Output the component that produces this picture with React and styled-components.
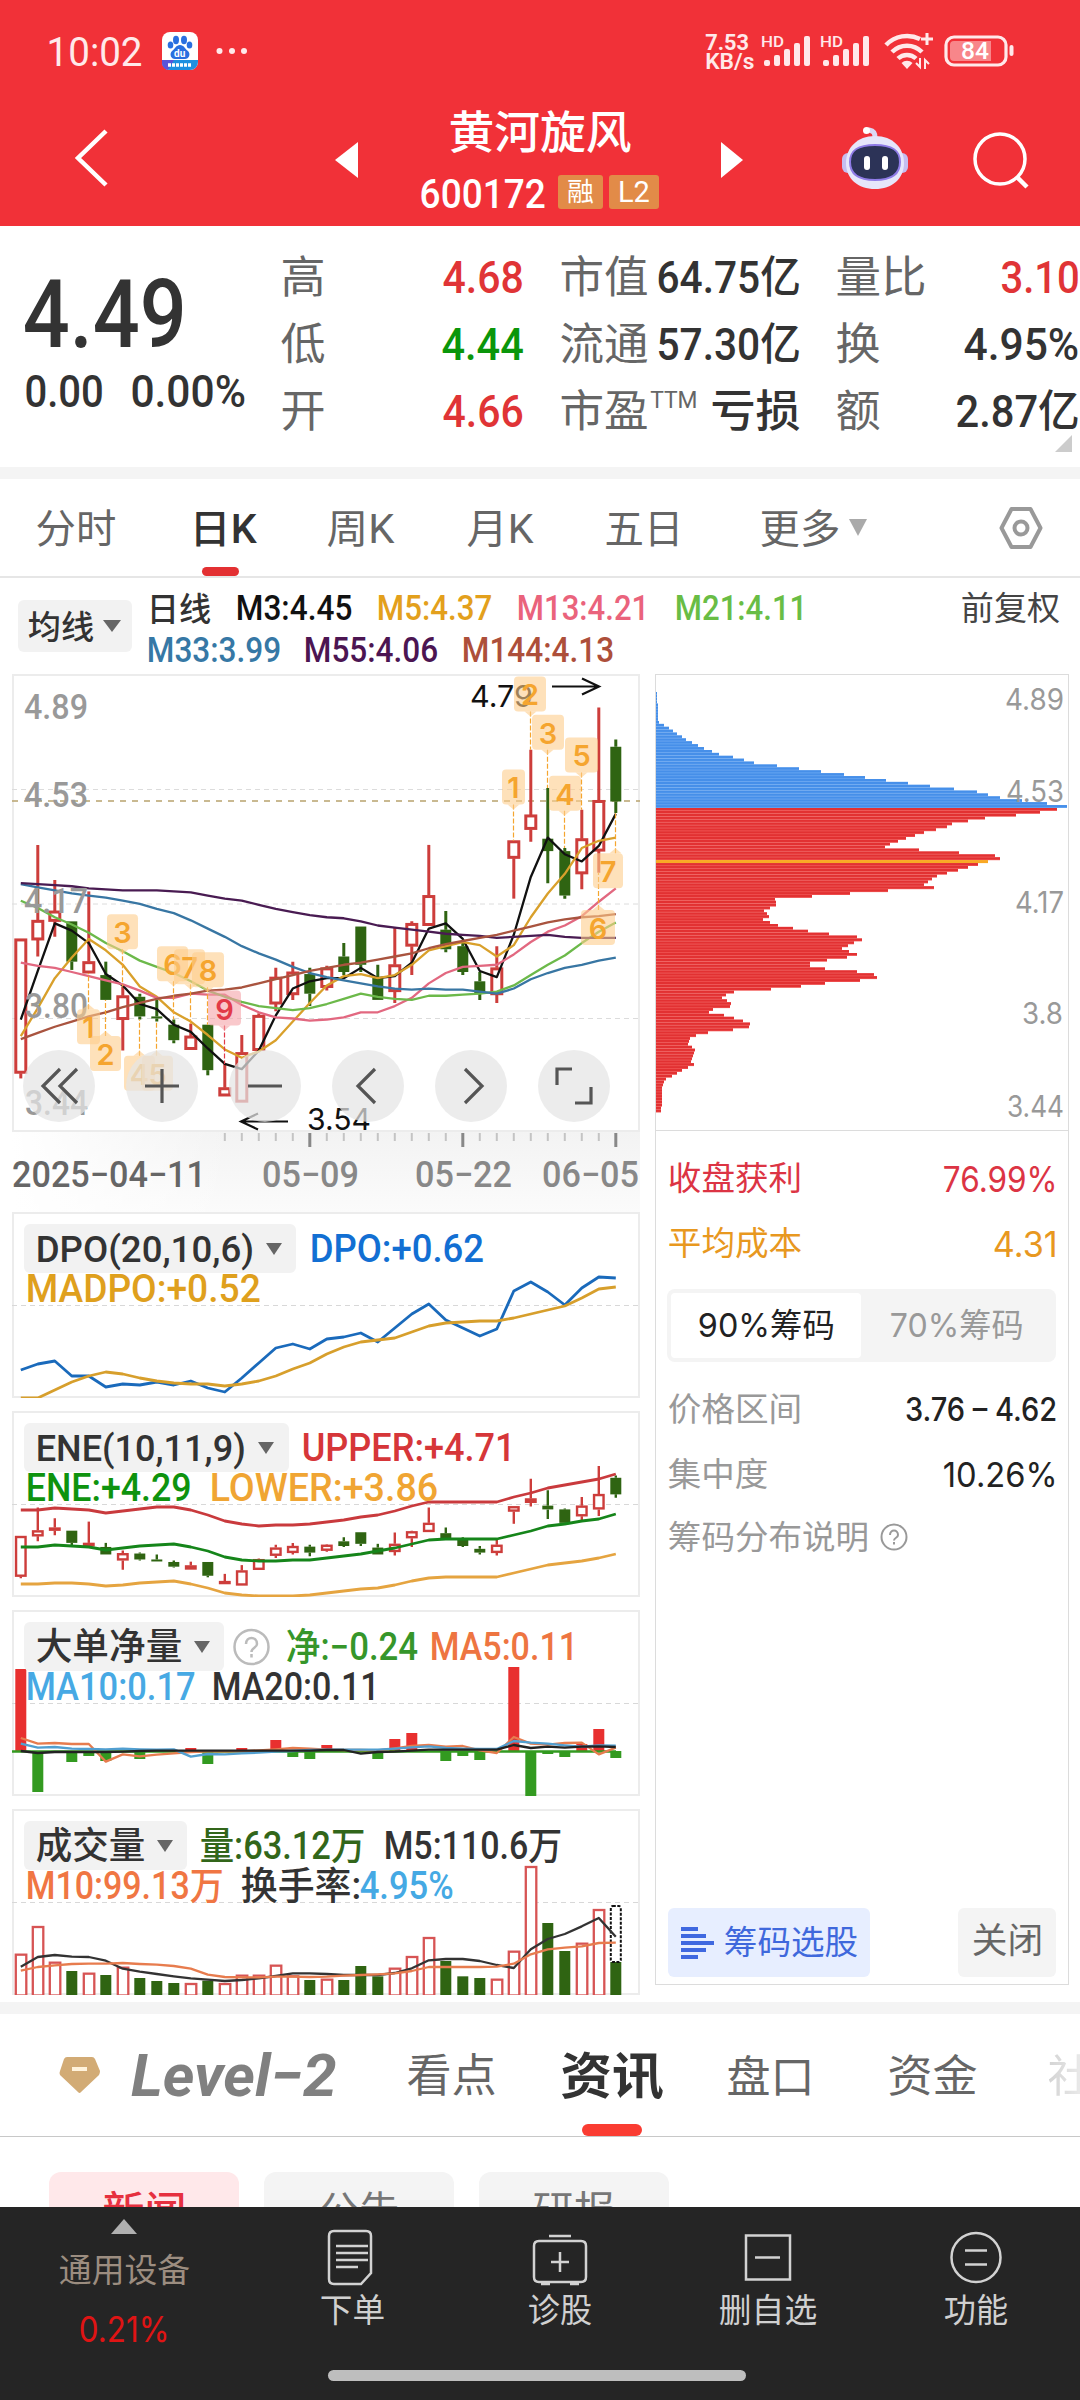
import { useLayoutEffect, useRef, useState } from "react";
import styled, { createGlobalStyle } from "styled-components";

const GlobalStyle = createGlobalStyle`
* { box-sizing: border-box; }
html, body { margin: 0; padding: 0; background: #fff; }
body { font-family: Roboto, "Noto Sans CJK SC", sans-serif; color: #333; }
svg { display: block; flex: none; overflow: visible; }
`

const Page = styled.div`
width: 1080px;
height: 2400px;
overflow: hidden;
display: flex;
flex-direction: column;
background: #fff;
`

/* text squeezed to a known width */
const Slot = styled.span`
display: block;
flex: none;
width: ${p => p.$w}px;
margin-left: ${p => p.$ml || 0}px;
font-size: ${p => p.$size}px;
font-weight: ${p => p.$weight || 400};
font-family: ${p => p.$round ? 'Inter, "Noto Sans CJK SC", sans-serif' : "inherit"};
font-style: ${p => p.$italic ? "italic" : "normal"};
color: ${p => p.$color || "inherit"};
line-height: 1.15;
white-space: nowrap;
`
const Ink = styled.span`
display: inline-block;
transform-origin: 0 50%;
`
function Fit({ w, ml, dy = 2, size, weight, color, round, italic, children }) {
    const ref = useRef(null);
    const [k, setK] = useState(1);
    const pad = size * 0.07;
    useLayoutEffect(() => {
        setK((w + pad) / ref.current.offsetWidth);
    }, [w, pad]);
    return <Slot $w={w} $ml={ml} $size={size} $weight={weight} $color={color} $round={round} $italic={italic}>
        <Ink ref={ref} style={{ transform: `translate(${-pad / 2}px, ${dy}px) scaleX(${k})` }}>{children}</Ink>
    </Slot>
}

const Label = ({ x, y, w, size, children, ...rest }) =>
    <text x={x} y={y} textLength={w} lengthAdjust="spacingAndGlyphs" fontSize={size} {...rest}>{children}</text>

/* ---------- header ---------- */
const Header = styled.header`
flex: none;
height: 226px;
background: #f13138;
color: #fff;
`
const StatusBar = styled.div`
height: 102px;
display: flex;
align-items: center;
padding-left: 48px;
color: #ffe9ea;
`
const Speed = styled.div`
margin-left: 458px;
width: 54px;
display: flex;
flex-direction: column;
line-height: 20px;
`
const NavBar = styled.div`
height: 116px;
display: flex;
align-items: center;
padding-left: 74px;
`
const NavIcon = styled.svg`
margin-left: ${p => p.$ml || 0}px;
`
const TitleBlock = styled.div`
width: 238px;
margin-left: 62px;
display: flex;
flex-direction: column;
align-items: center;
`
const TitleRow = styled.div`
height: 54px;
display: flex;
align-items: center;
`
const CodeRow = styled.div`
height: 52px;
margin-top: 10px;
display: flex;
align-items: center;
`
const Tag = styled.div`
width: ${p => p.$w}px;
height: 34px;
margin-left: ${p => p.$ml}px;
border-radius: 3px;
background: #e28b48;
display: flex;
align-items: center;
justify-content: center;
`

const Bars = ({ ml }) => <NavIcon $ml={ml} width="51" height="32" viewBox="0 0 51 32" fill="#ffe9ea">
    <rect x="3" y="25" width="6" height="6" rx="2" />
    <rect x="13" y="20" width="6" height="11" rx="2" />
    <rect x="23" y="14" width="6" height="17" rx="2" />
    <rect x="33" y="8" width="6" height="23" rx="2" />
    <rect x="43" y="1" width="6" height="30" rx="2" />
    <Label x="0" y="11.500" w="23" size="15" fontWeight="500">HD</Label>
</NavIcon>

function TopHeader() {
    return <Header>
        <StatusBar>
            <Fit w={93} size={41}>10:02</Fit>
            <NavIcon $ml={21} width="36" height="38" viewBox="0 0 36 38">
                <rect width="36" height="38" rx="8" fill="#fff" />
                <path d="M0 28h36v2a8 8 0 0 1-8 8H8a8 8 0 0 1-8-8z" fill="#1e8fe0" />
                <path d="M0 28h12l-6 10a8 8 0 0 1-6-8z" fill="#5a54d8" />
                <g fill="#2a6fe0">
                    <ellipse cx="14" cy="8" rx="3" ry="4.2" />
                    <ellipse cx="22" cy="8" rx="3" ry="4.2" />
                    <ellipse cx="8.5" cy="13" rx="2.8" ry="3.6" />
                    <ellipse cx="27.5" cy="13" rx="2.8" ry="3.6" />
                    <path d="M18 13c4 0 5 4 8 6 3 3 1 8-3 8H13c-4 0-6-5-3-8 3-2 4-6 8-6z" />
                </g>
                <text x="12" y="25" fontSize="10" fontWeight="700" fill="#fff">du</text>
                <path d="M6 33h24" stroke="#fff" strokeWidth="3.5" strokeDasharray="3 1" />
            </NavIcon>
            <NavIcon $ml={18} width="32" height="8" viewBox="0 0 32 8" fill="#ffe9ea">
                <circle cx="3.5" cy="4" r="3" /><circle cx="16" cy="4" r="3" /><circle cx="28" cy="4" r="3" />
            </NavIcon>
            <Speed>
                <Fit w={42} dy={4} size={22} weight={700}>7.53</Fit>
                <Fit w={48} dy={-2} size={22} weight={600}>KB/s</Fit>
            </Speed>
            <Bars ml={1} />
            <Bars ml={8} />
            <NavIcon $ml={13} width="50" height="38" viewBox="0 0 50 38" fill="none" stroke="#ffe9ea" strokeWidth="4.5">
                <path d="M2 13a29 29 0 0 1 34-6" />
                <path d="M8 20a21 21 0 0 1 30 0" />
                <path d="M14 26.500a13 13 0 0 1 18 0" />
                <path d="M17.500 31a8 8 0 0 1 11 0L23 37z" fill="#ffe9ea" stroke="none" />
                <path d="M43 1v12M37 7h12" strokeWidth="3" />
                <path d="M36 26v9l-4-4M41 37v-9l4 4" strokeWidth="2" />
            </NavIcon>
            <NavIcon $ml={10} width="70" height="32" viewBox="0 0 70 32">
                <rect x="2" y="2" width="60" height="28" rx="8" fill="none" stroke="#ffe9ea" strokeWidth="3.2" />
                <path d="M10 6h37v20H10a4 4 0 0 1-4-4V10a4 4 0 0 1 4-4z" fill="#f8868a" />
                <rect x="65.500" y="10" width="4" height="11" rx="2" fill="#ffe9ea" />
                <Label x="17" y="24" w="28" size="23" fontWeight="500" fill="#fff">84</Label>
            </NavIcon>
        </StatusBar>
        <NavBar>
            <NavIcon width="36" height="62" viewBox="0 0 36 62" fill="none" stroke="#fff" strokeWidth="4.500">
                <path d="M32 2L4 29l28 27" />
            </NavIcon>
            <NavIcon $ml={225} width="24" height="36" viewBox="0 0 24 36" fill="#fff"><path d="M23 0v36L0 18z" /></NavIcon>
            <TitleBlock>
                <TitleRow><Fit w={180} dy={5} size={45} weight={500}>黄河旋风</Fit></TitleRow>
                <CodeRow>
                    <Fit w={123} dy={3} size={40} weight={500}>600172</Fit>
                    <Tag $w={45} $ml={14}><Fit w={25} dy={1} size={26}>融</Fit></Tag>
                    <Tag $w={50} $ml={6}><Fit w={30} dy={1} size={29}>L2</Fit></Tag>
                </CodeRow>
            </TitleBlock>
            <NavIcon $ml={62} width="22" height="36" viewBox="0 0 22 36" fill="#fff"><path d="M0 0v36L22 18z" /></NavIcon>
            <NavIcon $ml={99} width="66" height="68" viewBox="0 0 66 68">
                <path d="M33 12c0-5-1-7-6-8" fill="none" stroke="#dcd9f5" strokeWidth="5" strokeLinecap="round" />
                <circle cx="24.500" cy="4.500" r="3.500" fill="#fff" />
                <rect x="0" y="27" width="12" height="20" rx="6" fill="#c5bdf0" />
                <rect x="54" y="27" width="12" height="20" rx="6" fill="#c5bdf0" />
                <path d="M33 10c18 0 29 12 29 27 0 16-12 26-29 26S4 53 4 37C4 22 15 10 33 10z" fill="#e6e6fa" />
                <path d="M33 19c17 0 25 5 25 17s-8 18-25 18S8 48 8 36s8-17 25-17z" fill="#2c3357" stroke="#8f7be6" strokeWidth="2" />
                <rect x="22" y="30" width="6" height="14" rx="3" fill="#fff" />
                <rect x="40" y="30" width="6" height="14" rx="3" fill="#fff" />
            </NavIcon>
            <NavIcon $ml={64} width="58" height="58" viewBox="0 0 58 58" fill="none" stroke="#fff" strokeWidth="3.500">
                <circle cx="28" cy="28" r="25" /><path d="M45 46l10 10" strokeWidth="4.500" />
            </NavIcon>
        </NavBar>
    </Header>
}

/* ---------- quote ---------- */
const Quote = styled.section`
flex: none;
position: relative;
height: 241px;
display: flex;
`
const PriceBlock = styled.div`
width: 282px;
padding: 38px 0 0 26px;
`
const PriceNow = styled.div`
height: 94px;
display: flex;
align-items: center;
`
const PriceChange = styled.div`
height: 44px;
margin-top: 8px;
display: flex;
align-items: center;
`
const QuoteColumn = styled.div`
width: ${p => p.$w}px;
margin-left: ${p => p.$ml || 0}px;
padding-top: 15px;
`
const QuoteRow = styled.div`
height: 67px;
display: flex;
align-items: center;
justify-content: space-between;
`
const Superscript = styled.span`
margin-right: auto;
align-self: flex-start;
padding: 11px 0 0 4px;
`
const Corner = styled.i`
position: absolute;
left: 1055px;
bottom: 15px;
border: solid transparent;
border-width: 0 0 17px 17px;
border-bottom-color: #ccc;
`
const Gap = styled.div`
flex: none;
height: 12px;
background: #f4f4f4;
`
const RED = "#e03436";
const DARK = "#333";

const quoteColumns = [
    { w: 240, rows: [["高", 42, "4.68", 78, RED], ["低", 42, "4.44", 79, "#0a960a"], ["开", 42, "4.66", 78, RED]] },
    { w: 238, ml: 39, rows: [["市值", 86, "64.75亿", 141, DARK], ["流通", 86, "57.30亿", 141, DARK], ["市盈", 86, "亏损", 87, DARK, "TTM"]] },
    { w: 241, ml: 38, rows: [["量比", 88, "3.10", 76, RED], ["换", 42, "4.95%", 113, DARK], ["额", 42, "2.87亿", 121, DARK]] },
]

function QuotePanel() {
    return <Quote>
        <PriceBlock>
            <PriceNow><Fit w={157} dy={4} size={94} weight={500}>4.49</Fit></PriceNow>
            <PriceChange>
                <Fit w={76} dy={4} size={45} weight={500}>0.00</Fit>
                <Fit w={112} dy={4} ml={30} size={45} weight={500}>0.00%</Fit>
            </PriceChange>
        </PriceBlock>
        {quoteColumns.map((col, i) => <QuoteColumn key={i} $w={col.w} $ml={col.ml}>
            {col.rows.map(([name, nw, value, vw, color, sup]) => <QuoteRow key={name}>
                <Fit w={nw} dy={4} size={44} color="#666">{name}</Fit>
                {sup && <Superscript><Fit w={46} size={23} color="#666">{sup}</Fit></Superscript>}
                <Fit w={vw} dy={4} size={44} weight={500} color={color}>{value}</Fit>
            </QuoteRow>)}
        </QuoteColumn>)}
        <Corner />
    </Quote>
}

/* ---------- period tabs ---------- */
const PeriodTabs = styled.nav`
flex: none;
height: 99px;
display: flex;
padding-left: 37px;
border-bottom: 2px solid #e6e6e6;
`
const PeriodTab = styled.div`
position: relative;
height: 97px;
display: flex;
align-items: center;
margin-left: ${p => p.$ml || 0}px;
&::after {
content: "";
display: ${p => p.$active ? "block" : "none"};
position: absolute;
left: 11px;
bottom: 0;
width: 37px;
height: 9px;
border-radius: 5px;
background: #e33032;
}
`
const Caret = styled.i`
flex: none;
margin-left: ${p => p.$ml}px;
border: solid transparent;
border-width: ${p => p.$h}px ${p => p.$w / 2}px 0;
border-top-color: ${p => p.$color || "#666"};
`

function Periods() {
    return <PeriodTabs>
        <PeriodTab><Fit w={78} size={40} color="#666">分时</Fit></PeriodTab>
        <PeriodTab $ml={76} $active><Fit w={64} size={40} weight={500}>日K</Fit></PeriodTab>
        <PeriodTab $ml={73}><Fit w={65} size={40} color="#666">周K</Fit></PeriodTab>
        <PeriodTab $ml={75}><Fit w={64} size={40} color="#666">月K</Fit></PeriodTab>
        <PeriodTab $ml={74}><Fit w={76} size={40} color="#666">五日</Fit></PeriodTab>
        <PeriodTab $ml={79}>
            <Fit w={78} size={40} color="#666">更多</Fit>
            <Caret $ml={10} $w={19} $h={17} $color="#aaa" />
        </PeriodTab>
        <PeriodTab $ml={132}>
            <svg width="44" height="44" viewBox="0 0 44 44" fill="none" stroke="#999" strokeWidth="4" strokeLinejoin="round">
                <path d="M12.500 3h19L41.500 22l-10 19h-19L2.500 22z" /><circle cx="22" cy="22" r="6.500" />
            </svg>
        </PeriodTab>
    </PeriodTabs>
}

/* ---------- moving average legend ---------- */
const Legend = styled.div`
flex: none;
height: 96px;
display: flex;
padding-left: 18px;
`
const MaButton = styled.div`
width: 114px;
height: 52px;
margin-top: 22px;
padding-left: 11px;
border-radius: 6px;
background: #f2f2f2;
display: flex;
flex: none;
align-items: center;
`
const LegendLines = styled.div`
flex: none;
width: ${p => p.$w}px;
margin-left: 16px;
padding-top: 7px;
`
const LegendLine = styled.div`
height: 43px;
display: flex;
align-items: center;
`

function MaLegend() {
    return <Legend>
        <MaButton><Fit w={64} size={33} weight={500}>均线</Fit><Caret $ml={10} $w={18} $h={12} /></MaButton>
        <LegendLines $w={798}>
            <LegendLine>
                <Fit w={62} dy={3} size={33} weight={500}>日线</Fit>
                <Fit w={114} dy={3} ml={27} size={35} weight={500} color="#111">M3:4.45</Fit>
                <Fit w={113} dy={3} ml={27} size={35} weight={500} color="#e3a01c">M5:4.37</Fit>
                <Fit w={130} dy={3} ml={27} size={35} weight={500} color="#ea637c">M13:4.21</Fit>
                <Fit w={130} dy={3} ml={28} size={35} weight={500} color="#69bd45">M21:4.11</Fit>
            </LegendLine>
            <LegendLine>
                <Fit w={132} size={35} weight={500} color="#3678a5">M33:3.99</Fit>
                <Fit w={132} ml={25} size={35} weight={500} color="#4c1552">M55:4.06</Fit>
                <Fit w={150} ml={26} size={35} weight={500} color="#ad4f3a">M144:4.13</Fit>
            </LegendLine>
        </LegendLines>
        <LegendLines $w={97}><LegendLine><Fit w={97} size={33} color="#444">前复权</Fit></LegendLine></LegendLines>
    </Legend>
}

/* ---------- charts ---------- */
const Charts = styled.section`
flex: none;
height: 1328px;
display: flex;
padding-left: 12px;
`
const ChartColumn = styled.div`
width: 628px;
flex: none;
`
const KBox = styled.div`
position: relative;
height: 458px;
box-shadow: inset 0 0 0 2px #ececec;
`
const ToolRow = styled.div`
position: absolute;
left: 11px;
top: 376px;
display: flex;
gap: 31px;
`
const ToolButton = styled.button`
width: 72px;
height: 72px;
padding: 0;
border: 0;
border-radius: 50%;
background: rgba(229, 229, 229, .72);
display: flex;
align-items: center;
justify-content: center;
`
const Axis = styled.div`
height: 80px;
background: linear-gradient(90deg, #fff 0, rgba(255,255,255,0) 220px), linear-gradient(#f3f3f3, #fbfbfb);
`

const xAt = i => 20.8 + i * 17;
const points = (ys, f = y => y) => ys.map((y, i) => `${xAt(i)},${f(y)}`).join(" ");
const kY = y => 660 + (y - 660) * 1.0332;
const eneY = y => 1535 + (y - 929) * 0.313;

// up/down, high, body top, body bottom, low
const candles = [
    ["u", 929, 929, 1059, 1064], ["u", 838, 911, 930, 946], ["u", 872, 902, 912, 927], ["d", 912, 912, 951, 959],
    ["u", 883, 951, 962, 962], ["d", 951, 964, 988, 988], ["u", 975, 984, 1007, 1037], ["d", 982, 985, 1004, 1007],
    ["d", 988, 1004, 1006, 1009], ["d", 1007, 1012, 1027, 1030], ["u", 1011, 1023, 1036, 1036], ["d", 1012, 1012, 1056, 1061],
    ["u", 1050, 1073, 1081, 1081], ["u", 1022, 1039, 1087, 1087], ["u", 1001, 1003, 1037, 1037], ["u", 957, 966, 992, 999],
    ["u", 951, 961, 983, 988], ["d", 957, 963, 982, 994], ["u", 955, 957, 976, 979], ["d", 933, 946, 961, 964],
    ["d", 917, 917, 954, 961], ["d", 954, 966, 988, 988], ["u", 918, 954, 980, 991], ["u", 912, 914, 936, 964],
    ["u", 838, 887, 916, 916], ["d", 902, 920, 939, 942], ["d", 933, 936, 961, 964], ["d", 961, 970, 982, 988],
    ["u", 936, 957, 983, 991], ["u", 834, 834, 851, 890], ["u", 746, 809, 823, 835], ["d", 783, 832, 844, 875],
    ["d", 841, 844, 887, 890], ["u", 804, 832, 866, 881], ["u", 705, 795, 844, 865], ["d", 736, 743, 796, 807],
]
const m3 = [1007, 960, 914, 921, 933, 963, 974, 992, 997, 1012, 1019, 1035, 1050, 1055, 1037, 1003, 977, 970, 967, 967, 957, 967, 965, 952, 919, 914, 929, 960, 966, 925, 869, 831, 847, 854, 839, 808]
const m5 = [1023, 996, 967, 947, 929, 940, 954, 975, 985, 1000, 1009, 1022, 1036, 1044, 1038, 1027, 1009, 991, 974, 965, 963, 967, 964, 954, 940, 936, 932, 935, 946, 935, 908, 885, 866, 841, 834, 831]
const m13 = [952, 955, 957, 961, 965, 969, 973, 979, 986, 986, 982, 983, 983, 993, 1000, 1005, 1006, 1008, 1007, 1005, 1000, 1000, 994, 986, 972, 962, 956, 955, 954, 944, 932, 922, 916, 907, 893, 880]
const m21 = [892, 899, 908, 915, 923, 933, 941, 950, 956, 962, 970, 979, 985, 990, 994, 996, 998, 996, 992, 987, 982, 985, 987, 988, 984, 984, 983, 982, 980, 974, 964, 954, 945, 933, 922, 913]
const m33 = [876, 879, 882, 885, 887, 889, 892, 895, 900, 904, 911, 919, 927, 936, 943, 949, 956, 962, 966, 969, 972, 975, 977, 978, 977, 978, 978, 980, 982, 977, 968, 962, 957, 954, 950, 947]
const m55 = [875, 876, 877, 878, 880, 881, 882, 882, 882, 883, 884, 887, 890, 892, 896, 900, 903, 906, 908, 909, 912, 916, 918, 920, 922, 924, 925, 926, 928, 927, 926, 925, 927, 928, 928, 928]
const m144 = [1026, 1020, 1014, 1009, 1004, 1000, 995, 991, 987, 984, 982, 979, 978, 976, 972, 968, 964, 960, 957, 954, 952, 949, 946, 943, 938, 934, 931, 928, 925, 921, 917, 913, 910, 908, 907, 905]

// digit, box left, box top, box width, candle x, pointer side, line end
const marks = [
    [1, 77, 997, 23, 88.5, "up", 962], [2, 90, 1023, 31, 105.500, "up", 988], [3, 107, 905, 31, 122.500, "down", 975],
    [4, 124, 1042, 31, 139.500, "up", 1007], [5, 142, 1042, 31, 156.500, "up", 1009],
    [6, 157, 936, 31, 173.500, "down", 1007], [7, 174, 939, 31, 190.500, "down", 1011], [8, 192, 942, 32, 207.500, "down", 1012],
    [9, 208, 979, 33, 224.500, "down", 1050, "#e23a48", "#f5a3a8"],
    [1, 502, 765, 23, 513.500, "down", 834], [2, 514, 675, 32, 530.500, "down", 746], [3, 532, 712, 32, 547.500, "down", 783],
    [4, 549, 771, 32, 564.500, "down", 841], [5, 565, 734, 33, 581.500, "down", 804],
    [6, 581, 901, 34, 598.500, "up", 865], [7, 593, 846, 30, 615.500, "up", 807],
]

const Candle = ({ kind, x, high, top, bottom, low, slim }) => {
    const color = kind === "u" ? "#cd3d3b" : "#2f6412";
    const w = slim ? 9.5 : 10;
    const h = Math.max(bottom - top, 2);
    return <g stroke={color} strokeWidth={slim ? 2.4 : 3}>
        <path d={`M${x} ${high}V${top}M${x} ${bottom}V${low}`} />
        {kind === "u"
            ? <rect x={x - w / 2} y={top + 1} width={w} height={Math.max(h - 2, 1)} fill="#fff" />
            : <rect x={x - 5.5} y={top} width="11" height={h} fill={color} stroke="none" />}
    </g>
}

const Line = ({ ys, color, f, w = 2.3 }) => <polyline points={points(ys, f)} fill="none" stroke={color} strokeWidth={w} strokeLinejoin="round" />

function KChart() {
    return <KBox>
        <svg width="628" height="458" viewBox="12 673 628 458">
            <g strokeDasharray="5 4" stroke="#dcdcdc" strokeWidth="1">
                <path d="M12 788.500h628M12 903h628M12 1017.500h628" />
                <path d="M12 800h628" stroke="#b8a36e" strokeWidth="1.500" strokeDasharray="6 6" />
            </g>
            {candles.map(([kind, ...v], i) => {
                const [high, top, bottom, low] = v.map(kY);
                return <Candle key={i} kind={kind} x={xAt(i)} high={high} top={top} bottom={bottom} low={low} />
            })}
            <Line ys={m3} f={kY} color="#111" />
            <Line ys={m5} f={kY} color="#d9a02b" />
            <Line ys={m13} f={kY} color="#e26880" />
            <Line ys={m21} f={kY} color="#6cb94a" />
            <Line ys={m33} f={kY} color="#3876a3" />
            <Line ys={m55} f={kY} color="#491b52" />
            <Line ys={m144} f={kY} color="#a9543f" />
            <g fill="#999" fontWeight="500">
                <Label x="24" y="718" w="64" size="35">4.89</Label>
                <Label x="24" y="806" w="64" size="35">4.53</Label>
                <Label x="24" y="912" w="64" size="35">4.17</Label>
                <Label x="25" y="1017" w="63" size="35">3.80</Label>
                <Label x="25" y="1114" w="63" size="35">3.44</Label>
            </g>
            <g fontFamily="Inter">
                <Label x="470" y="706" w="63" size="30" fill="#111">4.79</Label>
                <Label x="307" y="1129" w="64" size="30" fill="#111">3.54</Label>
            </g>
            <path d="M552 685.500h46M582 677.500l17 8l-17 8M288 1120.500h-46M258 1112.500l-17 8l17 8" fill="none" stroke="#111" strokeWidth="2.200" />
            {marks.map(([n, bx, top, bw, cx, side, end, ink = "#f5a52f", bg = "#fdcd8c"], i) => {
                const by = kY(top);
                return <g key={i}>
                    <path d={`M${cx} ${side === "up" ? by : by + 35}V${kY(end)}`} stroke={ink} strokeWidth="1.2" strokeDasharray="5 2" />
                    <g fill={bg} fillOpacity=".6">
                        <rect x={bx} y={by} width={bw} height="35" rx="4" />
                        <path d={side === "up" ? `M${cx - 6} ${by}h12l-6-5z` : `M${cx - 6} ${by + 35}h12l-6 5z`} />
                    </g>
                    <text x={bx + bw / 2} y={by + 29} fontSize="29" fontWeight="600" fontFamily="Inter" textAnchor="middle" fill={ink}>{n}</text>
                </g>
            })}
        </svg>
        <ToolRow>
            {["M21 3L4 20l17 17M38 3L21 20l17 17", "M3 20h34M20 3v34", "M3 20h34", "M27 3L10 20l17 17", "M14 3l17 17l-17 17", "M18 3H3v16M21 37h16V21"].map(d =>
                <ToolButton key={d}>
                    <svg width="40" height="40" viewBox="0 0 40 40" fill="none" stroke="#555" strokeWidth="3.200"><path d={d} /></svg>
                </ToolButton>)}
        </ToolRow>
    </KBox>
}

function TimeAxis() {
    const ticks = Array.from({ length: 24 }, (_, k) => k + 12);
    return <Axis>
        <svg width="628" height="80" viewBox="12 1131 628 80">
            {ticks.map(i => {
                const major = [17, 26, 35].includes(i);
                return <path key={i} d={`M${xAt(i)} 1132v${major ? 14 : 8}`} stroke={major ? "#888" : "#c4c4c4"} strokeWidth={major ? 3 : 2} />
            })}
            <g fontWeight="500" fill="#888">
                <Label x="12" y="1185.500" w="194" size="36" fill="#666">2025−04−11</Label>
                <Label x="262" y="1185.500" w="97" size="36">05−09</Label>
                <Label x="415" y="1185.500" w="97" size="36">05−22</Label>
                <Label x="542" y="1185.500" w="97" size="36">06−05</Label>
            </g>
        </svg>
    </Axis>
}

/* ---------- indicator boxes ---------- */
const Indicators = styled.div`
display: flex;
flex-direction: column;
gap: 13px;
`
const IndicatorBox = styled.div`
position: relative;
height: 186px;
padding: 12px 0 0 12px;
box-shadow: inset 0 0 0 2px #ececec;
`
const Plot = styled.svg`
position: absolute;
left: 0;
top: 0;
overflow: hidden;
`
const HeadRow = styled.div`
position: relative;
height: ${p => p.$h}px;
padding-left: ${p => p.$pad || 0}px;
display: flex;
align-items: center;
`
const Picker = styled.div`
width: ${p => p.$w}px;
height: 49px;
flex: none;
padding-left: 13px;
border-radius: 6px;
background: #f2f2f2;
display: flex;
align-items: center;
`

function Indicator({ top, name, nw, bw, first, second, help, children }) {
    return <IndicatorBox>
        <Plot width="628" height="186" viewBox={`12 ${top} 628 186`}>
            <path d={`M12 ${top + 93.500}h628`} stroke="#d8d8d8" strokeDasharray="5 4" />
            {children}
        </Plot>
        <HeadRow $h={49}>
            <Picker $w={bw}><Fit w={nw} size={37} weight={500}>{name}</Fit><Caret $ml={13} $w={16} $h={12} /></Picker>
            {help && <NavIcon $ml={9} width="37" height="38" viewBox="0 0 37 38" fill="none" stroke="#bbb" strokeWidth="2.500">
                <circle cx="18.500" cy="19" r="17" /><path d="M13 16c0-8 11-8 11 0 0 4-5.500 3.500-5.500 8M18.500 26v3.500" />
            </NavIcon>}
            {first.map(([t, w, ml, c]) => <Fit key={t} w={w} dy={1} ml={ml} size={38} weight={500} color={c}>{t}</Fit>)}
        </HeadRow>
        <HeadRow $h={31} $pad={3}>
            {second.map(([t, w, ml, c]) => <Fit key={t} w={w} dy={1} ml={ml} size={38} weight={500} color={c}>{t}</Fit>)}
        </HeadRow>
    </IndicatorBox>
}

const dpo = [1369, 1363, 1360, 1375, 1375, 1386, 1383, 1384, 1381, 1384, 1380, 1387, 1391, 1377, 1362, 1347, 1343, 1348, 1338, 1336, 1332, 1341, 1327, 1313, 1303, 1319, 1327, 1335, 1328, 1290, 1281, 1291, 1304, 1287, 1276, 1277]
const madpo = [1397, 1397, 1389, 1381, 1375, 1371, 1373, 1377, 1380, 1382, 1383, 1383, 1385, 1383, 1380, 1375, 1368, 1362, 1353, 1346, 1341, 1339, 1337, 1331, 1325, 1322, 1321, 1320, 1320, 1317, 1313, 1309, 1305, 1297, 1288, 1286]
const upper = [1509, 1509, 1507, 1508, 1509, 1512, 1510, 1508, 1506, 1506, 1509, 1514, 1520, 1523, 1525, 1524, 1524, 1523, 1521, 1519, 1516, 1514, 1510, 1505, 1501, 1501, 1501, 1501, 1501, 1496, 1492, 1487, 1484, 1481, 1478, 1473]
const ene = [1546, 1546, 1544, 1545, 1546, 1549, 1547, 1545, 1544, 1543, 1546, 1550, 1556, 1559, 1560, 1560, 1559, 1559, 1557, 1555, 1553, 1550, 1547, 1543, 1539, 1538, 1538, 1538, 1538, 1534, 1530, 1525, 1523, 1520, 1518, 1513]
const lower = [1583, 1583, 1582, 1582, 1583, 1585, 1584, 1582, 1581, 1580, 1583, 1587, 1592, 1594, 1595, 1595, 1595, 1594, 1592, 1590, 1588, 1587, 1584, 1580, 1577, 1576, 1576, 1576, 1576, 1572, 1568, 1564, 1562, 1560, 1557, 1553]

// candle index, bar end; the sign follows from the side of the zero line
const netBars = [[0, 1668], [1, 1791], [3, 1761], [4, 1755], [5, 1760], [7, 1758], [10, 1747], [11, 1763], [13, 1747], [15, 1739], [16, 1756], [17, 1758], [18, 1744], [21, 1758], [22, 1738], [23, 1732], [25, 1760], [26, 1755], [27, 1759], [29, 1666], [30, 1795], [31, 1753], [32, 1756], [33, 1743], [34, 1728], [35, 1757]]
// line heights below are in thirds of a pixel from y = 1600
const third = y => 1600 + y / 3;
const net5 = [411, 428, 426, 429, 429, 482, 460, 466, 461, 457, 453, 451, 451, 451, 448, 445, 441, 443, 446, 447, 447, 448, 442, 435, 432, 437, 435, 448, 456, 408, 428, 431, 426, 425, 460, 440]
const net10 = [428, 440, 438, 443, 444, 445, 443, 445, 446, 445, 467, 459, 460, 457, 455, 452, 450, 447, 446, 446, 446, 446, 443, 439, 436, 441, 443, 444, 444, 420, 425, 428, 433, 437, 433, 434]
const net20 = [450, 456, 453, 453, 453, 453, 452, 450, 449, 449, 449, 449, 449, 449, 449, 449, 449, 449, 447, 447, 458, 453, 452, 449, 446, 446, 446, 446, 446, 432, 441, 437, 440, 437, 436, 438]
const volumes = [1058, 975, 1082, 1110, 1115, 1122, 1097, 1131, 1140, 1146, 1146, 1139, 1146, 1121, 1121, 1091, 1123, 1137, 1133, 1137, 1095, 1126, 1100, 1065, 1008, 1080, 1126, 1131, 1133, 1049, 795, 966, 1050, 1025, 924, 1083]
const vol5 = [1097, 1068, 1062, 1067, 1068, 1079, 1103, 1112, 1119, 1126, 1132, 1136, 1140, 1137, 1132, 1125, 1117, 1117, 1119, 1122, 1122, 1122, 1116, 1102, 1078, 1074, 1074, 1080, 1092, 1101, 1045, 1014, 999, 976, 951, 1007]
const vol10 = [1109, 1098, 1093, 1089, 1088, 1088, 1086, 1089, 1091, 1095, 1103, 1121, 1128, 1129, 1129, 1127, 1127, 1128, 1127, 1124, 1122, 1120, 1117, 1110, 1098, 1098, 1098, 1098, 1097, 1088, 1060, 1045, 1040, 1036, 1026, 1025]

function IndicatorList() {
    return <Indicators>
        <Indicator top={1211} name="DPO(20,10,6)" nw={216} bw={272}
            first={[["DPO:+0.62", 172, 15, "#126fd3"]]}
            second={[["MADPO:+0.52", 232, 0, "#dfa01d"]]}>
            <Line ys={dpo} color="#1a6abb" w={2.8} />
            <Line ys={madpo} color="#d79f2c" w={2.8} />
        </Indicator>
        <Indicator top={1410} name="ENE(10,11,9)" nw={208} bw={265}
            first={[["UPPER:+4.71", 211, 14, "#d63639"]]}
            second={[["ENE:+4.29", 163, 0, "#0e930e"], ["LOWER:+3.86", 226, 21, "#f0a533"]]}>
            {candles.map(([kind, ...v], i) => {
                const [high, top, bottom, low] = v.map(eneY);
                return <Candle key={i} slim kind={kind} x={xAt(i)} high={high} top={top} bottom={bottom} low={low} />
            })}
            <Line ys={upper} color="#c93a3d" w={2.8} />
            <Line ys={ene} color="#15851a" w={2.8} />
            <Line ys={lower} color="#e5a440" w={2.8} />
        </Indicator>
        <Indicator top={1609} name="大单净量" nw={144} bw={200} help
            first={[["净:−0.24", 130, 17, "#36962a"], ["MA5:0.11", 146, 14, "#ee7541"]]}
            second={[["MA10:0.17", 167, 0, "#47a9e4"], ["MA20:0.11", 165, 19, DARK]]}>
            {netBars.map(([i, end]) =>
                <rect key={i} x={xAt(i) - 5.5} y={Math.min(1750, end)} width="11" height={Math.abs(end - 1750)} fill={end < 1750 ? "#e8302f" : "#339a20"} />)}
            <path d="M12 1750.500h604" stroke="#339a20" strokeWidth="2.500" />
            <Line ys={net5} f={third} color="#e77c4e" />
            <Line ys={net10} f={third} color="#519fd0" />
            <Line ys={net20} f={third} color="#222" />
        </Indicator>
        <Indicator top={1808} name="成交量" nw={107} bw={163}
            first={[["量:63.12万", 163, 14, "#32661a"], ["M5:110.6万", 176, 21, DARK]]}
            second={[["M10:99.13万", 195, 0, "#f07643"], ["换手率:", 118, 20, DARK], ["4.95%", 91, 1, "#45a9e4"]]}>
            {volumes.map((v, i) => candles[i][0] === "u"
                ? <rect key={i} x={xAt(i) - 5} y={third(v) + 1} width="10.500" height={1993.500 - third(v)} fill="#fff" stroke="#d75454" strokeWidth="2.300" />
                : <rect key={i} x={xAt(i) - 5.5} y={third(v)} width="11" height={1995 - third(v)} fill="#2f6412" />)}
            <rect x={xAt(35) - 5} y="1905" width="10" height="56" rx="2" fill="none" stroke="#111" strokeWidth="2" strokeDasharray="3 1.500" />
            <Line ys={vol5} f={third} color="#333" />
            <Line ys={vol10} f={third} color="#e77c4e" />
        </Indicator>
    </Indicators>
}

/* ---------- chip distribution ---------- */
const ChipPanel = styled.aside`
width: 414px;
height: 1311px;
margin-left: 15px;
flex: none;
border: 1px solid #dcdcdc;
display: flex;
flex-direction: column;
`
const ChipChart = styled.div`
height: 456px;
border-bottom: 1px solid #dcdcdc;
`
const InfoRow = styled.div`
height: 64.500px;
display: flex;
align-items: center;
justify-content: space-between;
padding: 0 12px 0 13px;
`
const InfoGroup = styled.div`
margin-top: 14px;
`
const Segment = styled.div`
height: 73px;
margin: 15px 12px 0 11px;
padding: 4px;
border-radius: 8px;
background: #f4f4f4;
display: flex;
`
const SegmentItem = styled.div`
flex: ${p => p.$active ? "0 0 190px" : 1};
border-radius: 4px;
background: ${p => p.$active ? "#fff" : "none"};
display: flex;
align-items: center;
justify-content: center;
`
const HelpWrap = styled.div`
display: flex;
align-items: center;
`
const PanelFoot = styled.div`
margin: auto 12px 7px;
display: flex;
justify-content: space-between;
`
const FootButton = styled.div`
width: ${p => p.$w}px;
height: 69px;
border-radius: 6px;
background: ${p => p.$blue ? "#e7eeff" : "#f4f4f4"};
display: flex;
align-items: center;
justify-content: center;
`

const chips = [
    1, 1, 1, 1, 2, 2, 2, 2, 2, 2, 3, 8, 13, 17, 21, 26, 30, 36, 42, 48, 56, 63, 77, 88, 98, 121, 143, 165, 188, 209,
    230, 252, 274, 298, 321, 332, 344, 366, 391, 411, 401, 384, 360, 329, 312, 296, 291, 280, 268, 259, 250, 242, 234,
    229, 263, 303, 339, 344, 332, 322, 312, 302, 291, 281, 276, 272, 268, 278, 232, 194, 156, 119, 120, 120, 114, 108,
    111, 113, 107, 114, 122, 137, 152, 173, 201, 206, 198, 192, 186, 193, 201, 191, 171, 154, 154, 169, 201, 218, 221,
    204, 169, 145, 115, 78, 70, 66, 71, 75, 74, 57, 53, 68, 78, 87, 94, 93, 77, 52, 40, 34, 33, 32, 36, 39, 38, 37, 36,
    35, 38, 32, 26, 21, 16, 10, 8, 7, 6, 6, 6, 6, 6, 6, 6, 5, 5,
]
const chipColor = r => r === 58 ? ["#f9a825", "#f9a825"] : r < 40 ? ["#468fe9", "#6ba8f2"] : ["#e23132", "#f25a58"];

function ChipDistribution() {
    return <ChipPanel>
        <ChipChart>
            <svg width="412" height="455" viewBox="656 674 412 455">
                {chips.map((w, r) => {
                    const y = 691 + r * 2.9;
                    const [body, seam] = chipColor(r);
                    return <g key={r}>
                        <rect x="656" y={y} width={w} height="2.900" fill={seam} />
                        <rect x="656" y={y} width={w} height="2.200" fill={body} />
                    </g>
                })}
                <g fontFamily="Inter" fill="#999">
                    <Label x="1005" y="709" w="59" size="29.500">4.89</Label>
                    <Label x="1006" y="801" w="58" size="29.500">4.53</Label>
                    <Label x="1015" y="912" w="49" size="29.500">4.17</Label>
                    <Label x="1022" y="1023" w="41" size="29.500">3.8</Label>
                    <Label x="1007" y="1116" w="57" size="29.500">3.44</Label>
                </g>
            </svg>
        </ChipChart>
        <InfoGroup>
            <InfoRow><Fit round w={132} size={33} color="#dc3444">收盘获利</Fit><Fit round w={112} size={35} color="#dc3444">76.99%</Fit></InfoRow>
            <InfoRow><Fit round w={132} size={33} color="#e8981f">平均成本</Fit><Fit round w={62} size={35} color="#e8981f">4.31</Fit></InfoRow>
        </InfoGroup>
        <Segment>
            <SegmentItem $active><Fit round w={135} dy={0} size={33} color="#222">90%筹码</Fit></SegmentItem>
            <SegmentItem><Fit round w={131} dy={0} size={33} color="#999">70%筹码</Fit></SegmentItem>
        </Segment>
        <InfoGroup>
            <InfoRow><Fit round w={132} size={33} color="#999">价格区间</Fit><Fit round w={150} size={32} weight={500} color="#222">3.76 – 4.62</Fit></InfoRow>
            <InfoRow><Fit round w={98} size={33} color="#999">集中度</Fit><Fit round w={112} size={34} color="#222">10.26%</Fit></InfoRow>
            <InfoRow>
                <HelpWrap>
                    <Fit round w={199} dy={1} size={33} color="#999">筹码分布说明</Fit>
                    <NavIcon $ml={12} width="28" height="28" viewBox="0 0 28 28" fill="none" stroke="#999" strokeWidth="2">
                        <circle cx="14" cy="14" r="12.500" /><path d="M10 12c0-6 8-6 8 0 0 3-4 2.500-4 5.500M14 19v2.500" />
                    </NavIcon>
                </HelpWrap>
            </InfoRow>
        </InfoGroup>
        <PanelFoot>
            <FootButton $w={202} $blue>
                <svg width="33" height="34" viewBox="0 0 33 34" stroke="#3f68e0" strokeWidth="4">
                    <path d="M0 3h17M0 10h25M0 17h33M0 24h25M0 31h17" />
                </svg>
                <Fit w={132} dy={0} ml={11} size={33} color="#3f68dc">筹码选股</Fit>
            </FootButton>
            <FootButton $w={98}><Fit w={69} dy={0} size={35} color="#666">关闭</Fit></FootButton>
        </PanelFoot>
    </ChipPanel>
}

/* ---------- section tabs ---------- */
const SectionTabs = styled.nav`
flex: none;
height: 123px;
display: flex;
padding-left: 59px;
overflow: hidden;
border-bottom: 1px solid #c8c8c8;
`
const SectionTab = styled.div`
position: relative;
height: 122px;
margin-left: ${p => p.$ml || 0}px;
display: flex;
align-items: center;
&::after {
content: "";
display: ${p => p.$active ? "block" : "none"};
position: absolute;
left: 20px;
bottom: 0;
width: 60px;
height: 12px;
border-radius: 6px;
background: #fa3c32;
}
`
const Fade = styled.div`
-webkit-mask-image: linear-gradient(90deg, #000, rgba(0,0,0,.35));
mask-image: linear-gradient(90deg, #000, rgba(0,0,0,.35));
`
const Pills = styled.div`
flex: none;
height: 70px;
padding: 35px 0 0 49px;
display: flex;
gap: 25px;
overflow: hidden;
`
const Pill = styled.div`
width: 190px;
height: 76px;
flex: none;
border-radius: 12px;
background: ${p => p.$active ? "#ffe8ea" : "#f4f4f4"};
display: flex;
align-items: center;
justify-content: center;
`

function NewsSection() {
    return <>
        <SectionTabs>
            <SectionTab>
                <svg width="41" height="48" viewBox="0 0 41 48">
                    <path d="M8 6h25q2 0 3 2l5 12q0 2-1 4L22 41q-1.500 2-3 0L1 24q-1-2 0-4L5 8q1-2 3-2z" fill="#d2ab75" />
                    <path d="M13 18h15" stroke="#fff3dc" strokeWidth="4" />
                </svg>
            </SectionTab>
            <SectionTab $ml={33}><Fit w={202} dy={1} size={59} weight={700} italic color="#808080">Level−2</Fit></SectionTab>
            <SectionTab $ml={73}><Fit w={87} size={45} color="#666">看点</Fit></SectionTab>
            <SectionTab $ml={67} $active><Fit w={100} dy={3} size={50} weight={700}>资讯</Fit></SectionTab>
            <SectionTab $ml={66}><Fit w={85} dy={3} size={44} color="#666">盘口</Fit></SectionTab>
            <SectionTab $ml={76}><Fit w={87} size={44} color="#666">资金</Fit></SectionTab>
            <SectionTab $ml={73}><Fade><Fit w={42} size={44} color="#d4d4d4">社</Fit></Fade></SectionTab>
        </SectionTabs>
        <Pills>
            <Pill $active><Fit w={81} size={40} weight={500} color="#e6303f">新闻</Fit></Pill>
            <Pill><Fit w={78} size={40} color="#777">公告</Fit></Pill>
            <Pill><Fit w={80} size={40} color="#777">研报</Fit></Pill>
        </Pills>
    </>
}

/* ---------- bottom bar ---------- */
const BottomBar = styled.footer`
flex: none;
height: 193px;
background: #252525;
`
const BottomItems = styled.div`
height: 163px;
display: flex;
`
const SectorItem = styled.div`
width: 248px;
padding-top: 12px;
display: flex;
flex-direction: column;
align-items: center;
`
const BottomItem = styled.div`
width: 208px;
padding-top: 21px;
display: flex;
flex-direction: column;
align-items: center;
gap: 6px;
`
const UpCaret = styled.i`
border: solid transparent;
border-width: 0 13px 15px;
border-bottom-color: #b0b0b0;
`
const SectorName = styled.div`
margin-top: 15px;
`
const SectorChange = styled.div`
margin-top: 19px;
`
const HomeBar = styled.div`
width: 418px;
height: 11px;
margin-left: 328px;
border-radius: 6px;
background: #bebebe;
`

const bottomItems = [
    ["下单", 63, <path key="a" d="M9 3h32q5 0 5 5v37l-10 11H9q-5 0-5-5V8q0-5 5-5zM11 18h32M11 25h32M11 32h32M11 39h22" />],
    ["诊股", 62, <path key="b" d="M6 13h42q5 0 5 5v31q0 5-5 5H6q-5 0-5-5V18q0-5 5-5zM27 24v20M18 34h18M16 8h22M8 56h9M37 56h9" />],
    ["删自选", 96, <path key="c" d="M5 7.500h44v44H5zM14 29.500h25" />],
    ["功能", 62, <path key="d" d="M27 5a24.500 24.500 0 1 1 0 49a24.500 24.500 0 1 1 0-49zM16 22.500h22M16 36.500h22" />],
]

export default function App() {
    return <Page>
        <GlobalStyle />
        <TopHeader />
        <QuotePanel />
        <Gap />
        <Periods />
        <MaLegend />
        <Charts>
            <ChartColumn>
                <KChart />
                <TimeAxis />
                <IndicatorList />
            </ChartColumn>
            <ChipDistribution />
        </Charts>
        <Gap />
        <NewsSection />
        <BottomBar>
            <BottomItems>
                <SectorItem>
                    <UpCaret />
                    <SectorName><Fit w={129} dy={3} size={33} color="#9c8d80">通用设备</Fit></SectorName>
                    <SectorChange><Fit round w={88} dy={3} size={35} color="#e01414">0.21%</Fit></SectorChange>
                </SectorItem>
                {bottomItems.map(([name, w, icon]) => <BottomItem key={name}>
                    <svg width="54" height="58" viewBox="0 0 54 58" fill="none" stroke="#d2d2d2" strokeWidth="2.500">{icon}</svg>
                    <Fit w={w} dy={0} size={33} color="#d0d0d0">{name}</Fit>
                </BottomItem>)}
            </BottomItems>
            <HomeBar />
        </BottomBar>
    </Page>
}
